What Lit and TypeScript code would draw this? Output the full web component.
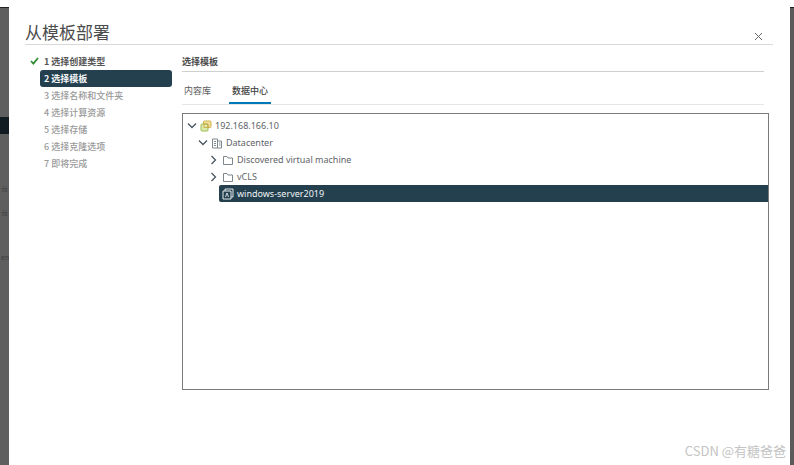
import { LitElement, html, css, svg } from "lit";
import { customElement } from "lit/decorators.js";

const chevR = svg`<path d="M2.5 1 L6.5 5 L2.5 9" fill="none" stroke="#4a5560" stroke-width="1.3"/>`;
const chevD = svg`<path d="M1 2.5 L5 6.5 L9 2.5" fill="none" stroke="#4a5560" stroke-width="1.3"/>`;

@customElement("app-root")
export class AppRoot extends LitElement {
  static styles = css`
    :host { display: block; width: 794px; height: 465px; overflow: hidden; background: #fff;
      font-family: "Noto Sans CJK SC", "Noto Sans", sans-serif; color: #565656; }
    .page { display: grid; grid-template-columns: 9px 781px 4px; height: 465px; }
    .strip { margin-top: 7px; background: #5f5f5f; border-top: 1px solid #222; display: flex; flex-direction: column; overflow: hidden; }
    .strip.right { background: #5a5a5a; }
    .band { margin-top: 109px; height: 17px; background: #101c22; }
    .ghost { font: 7px "Liberation Sans", sans-serif; color: #3c3c3c; white-space: nowrap; padding-top: 5px; margin-left: 1px; }
    .g1 { margin-top: 50px; padding: 0; }
    .g2 { margin-top: 14px; padding: 0; }
    .g3 { margin-top: 36px; padding: 0; }
    .modal { background: #fff; padding: 20px 17px 0 16px; display: flex; flex-direction: column; position: relative; }
    .head { display: flex; justify-content: space-between; align-items: flex-end; height: 24px; border-bottom: 1px solid #d8d8d8; padding-bottom: 0; }
    h1 { margin: 0; font-size: 17px; font-weight: 400; line-height: 24px; color: #4c4c4c; }
    .close { width: 9px; height: 9px; margin: 0 10px 3px 0; display: block; }
    .body { display: flex; }
    nav { width: 157px; padding-top: 8px; flex: none; }
    .step { height: 17px; line-height: 17px; font-size: 9px; color: #9a9a9a; padding-left: 19px; position: relative; font-weight: 500; white-space: nowrap; }
    .step.done { color: #565656; font-weight: 600; }
    .step.active { background: #24404f; color: #f2f5f7; font-weight: 600; border-radius: 3px; margin-left: 15px; width: 128px; padding-left: 4px; height: 17px; }
    .check { position: absolute; left: 5px; top: 4px; width: 9px; height: 8px; }
    main { width: 582px; padding-top: 8px; }
    .sub { font-size: 9px; font-weight: 600; color: #4c4c4c; height: 18px; line-height: 17px; border-bottom: 1px solid #cfcfcf; width: 582px; }
    .tabs { display: flex; gap: 20px; height: 25px; margin-top: 7px; border-bottom: 1px solid #e6e6e6; padding-left: 2px; }
    .tab { font-size: 9px; line-height: 23px; height: 25px; box-sizing: border-box; color: #5c5c5c; }
    .tab.on { color: #3e3e3e; font-weight: 500; border-bottom: 2px solid #0079b8; padding: 0 2px; margin-left: -2px; width: 42px; text-align: center; }
    .tree { margin-top: 8px; width: 587px; height: 277px; box-sizing: border-box; border: 1px solid #7b7b7b; padding-top: 3px; }
    .row { display: flex; align-items: center; height: 17px; font: 9px "Noto Sans", sans-serif; color: #5e6468; white-space: nowrap; }
    .chev { width: 10px; height: 10px; flex: none; margin-right: 3px; }
    .ico { width: 12px; height: 12px; flex: none; margin-right: 3px; }
    .r0 { padding-left: 4px; }
    .r1 { padding-left: 15px; }
    .r2 { padding-left: 26px; }
    .sel { margin-left: 36px; padding-left: 3px; height: 17px; background: #24404f; color: #f0f3f5; border-radius: 2px 0 0 2px; }
    .mark { position: absolute; right: 4px; bottom: 5px; font: 13px "Noto Sans CJK SC", sans-serif; color: #c4c4c4; }
  `;

  render() {
    return html`<div class="page">
      <div class="strip">
        <div class="band"></div>
        <div class="ghost g1">云</div>
        <div class="ghost g2">云</div>
        <div class="ghost g3">en</div>
      </div>
      <div class="modal">
        <div class="head">
          <h1>从模板部署</h1>
          <svg class="close" viewBox="0 0 9 9"><path d="M1 1 L8 8 M8 1 L1 8" stroke="#666" stroke-width="1" fill="none"/></svg>
        </div>
        <div class="body">
          <nav>
            <div class="step done"><svg class="check" viewBox="0 0 9 8"><path d="M1 4 L3.4 6.6 L8 1" fill="none" stroke="#2f8a2f" stroke-width="1.7"/></svg>1 选择创建类型</div>
            <div class="step active">2 选择模板</div>
            <div class="step">3 选择名称和文件夹</div>
            <div class="step">4 选择计算资源</div>
            <div class="step">5 选择存储</div>
            <div class="step">6 选择克隆选项</div>
            <div class="step">7 即将完成</div>
          </nav>
          <main>
            <div class="sub">选择模板</div>
            <div class="tabs">
              <div class="tab">内容库</div>
              <div class="tab on">数据中心</div>
            </div>
            <div class="tree">
              <div class="row r0">
                <svg class="chev" viewBox="0 0 10 10">${chevD}</svg>
                <svg class="ico" viewBox="0 0 12 12"><rect x="3.5" y="1" width="7.5" height="6.5" rx="1" fill="#f3e3a0" stroke="#d2b24a"/><rect x="1" y="4" width="7" height="7" rx="1" fill="#dcebb0" stroke="#9dbb4e"/><rect x="4" y="4" width="4" height="3.5" fill="none" stroke="#d2a13c" stroke-width=".8"/></svg>
                192.168.166.10
              </div>
              <div class="row r1">
                <svg class="chev" viewBox="0 0 10 10">${chevD}</svg>
                <svg class="ico" viewBox="0 0 12 12"><path d="M1.5 2 H6.5 V11 H1.5 Z M6.5 4 H10.5 V11 H6.5 Z M3 4.5 H5 M3 6.5 H5 M3 8.5 H5 M8 6 H9.5 M8 8 H9.5" fill="none" stroke="#7d868c" stroke-width="1"/></svg>
                Datacenter
              </div>
              <div class="row r2">
                <svg class="chev" viewBox="0 0 10 10">${chevR}</svg>
                <svg class="ico" viewBox="0 0 12 12"><path d="M1.5 10.5 V2.5 H5 L6 4 H10.5 V10.5 Z" fill="none" stroke="#7d868c"/></svg>
                Discovered virtual machine
              </div>
              <div class="row r2">
                <svg class="chev" viewBox="0 0 10 10">${chevR}</svg>
                <svg class="ico" viewBox="0 0 12 12"><path d="M1.5 10.5 V2.5 H5 L6 4 H10.5 V10.5 Z" fill="none" stroke="#7d868c"/></svg>
                vCLS
              </div>
              <div class="row sel">
                <svg class="ico" viewBox="0 0 12 12"><path d="M3 3 V1 H11 V9 H9 M1 3 H9 V11 H1 Z" fill="none" stroke="#e4e9ec"/><path d="M3.5 9 L5 5 L6.5 9" fill="none" stroke="#e4e9ec" stroke-width=".9"/></svg>
                windows-server2019
              </div>
            </div>
          </main>
        </div>
        <div class="mark">CSDN @有糖爸爸</div>
      </div>
      <div class="strip right"></div>
    </div>`;
  }
}
